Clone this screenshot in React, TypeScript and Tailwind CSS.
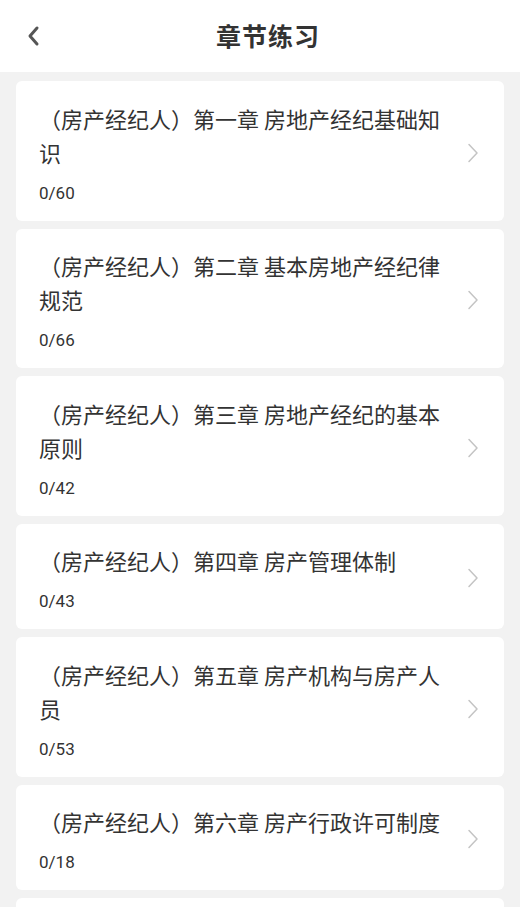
import React from "react";

const chapters = [
  { title: "（房产经纪人）第一章 房地产经纪基础知识", done: 0, total: 60 },
  { title: "（房产经纪人）第二章 基本房地产经纪律规范", done: 0, total: 66 },
  { title: "（房产经纪人）第三章 房地产经纪的基本原则", done: 0, total: 42 },
  { title: "（房产经纪人）第四章 房产管理体制", done: 0, total: 43 },
  { title: "（房产经纪人）第五章 房产机构与房产人员", done: 0, total: 53 },
  { title: "（房产经纪人）第六章 房产行政许可制度", done: 0, total: 18 },
  { title: "（房产经纪人）第七章 房产经纪服务合同", done: 0, total: 35 },
];

const ChevronRight = () => (
  <svg width="12" height="20" viewBox="0 0 12 20" fill="none">
    <path d="M2 1.5 L10 10 L2 18.5" stroke="#c4c4c4" strokeWidth="1.5" strokeLinecap="round" strokeLinejoin="round" />
  </svg>
);

const App: React.FC = () => {
  return (
    <div
      className="min-h-[907px] bg-[#f2f2f2] text-[#333]"
      style={{ fontFamily: '"Noto Sans CJK SC", "Noto Sans", sans-serif' }}
    >
      <header className="h-[72px] bg-white flex items-center relative">
        <button className="pl-[26px] pr-3 h-full flex items-center">
          <svg width="14" height="22" viewBox="0 0 14 22" fill="none">
            <path d="M11 3 L4 11 L11 19" stroke="#555" strokeWidth="3" strokeLinecap="round" strokeLinejoin="round" />
          </svg>
        </button>
        <h1 className="absolute left-[216px] text-[25px] font-bold text-[#333] tracking-[1px]">
          章节练习
        </h1>
      </header>

      <div className="flex flex-col gap-[8px] px-[16px] pt-[9px] pb-4">
        {chapters.map((c, i) => (
          <div key={i} className="bg-white rounded-[6px] flex items-center pl-[23px] pr-[25px] pt-[19.5px] pb-[16px]">
            <div className="flex-1 pr-[18px]">
              <div className="text-[22px] leading-[34px] text-[#333]">{c.title}</div>
              <div className="mt-[12px] text-[17px] leading-[24px] text-[#333]" style={{ fontFamily: "Roboto, sans-serif" }}>
                {c.done}/{c.total}
              </div>
            </div>
            <ChevronRight />
          </div>
        ))}
      </div>
    </div>
  );
};

export default App;
